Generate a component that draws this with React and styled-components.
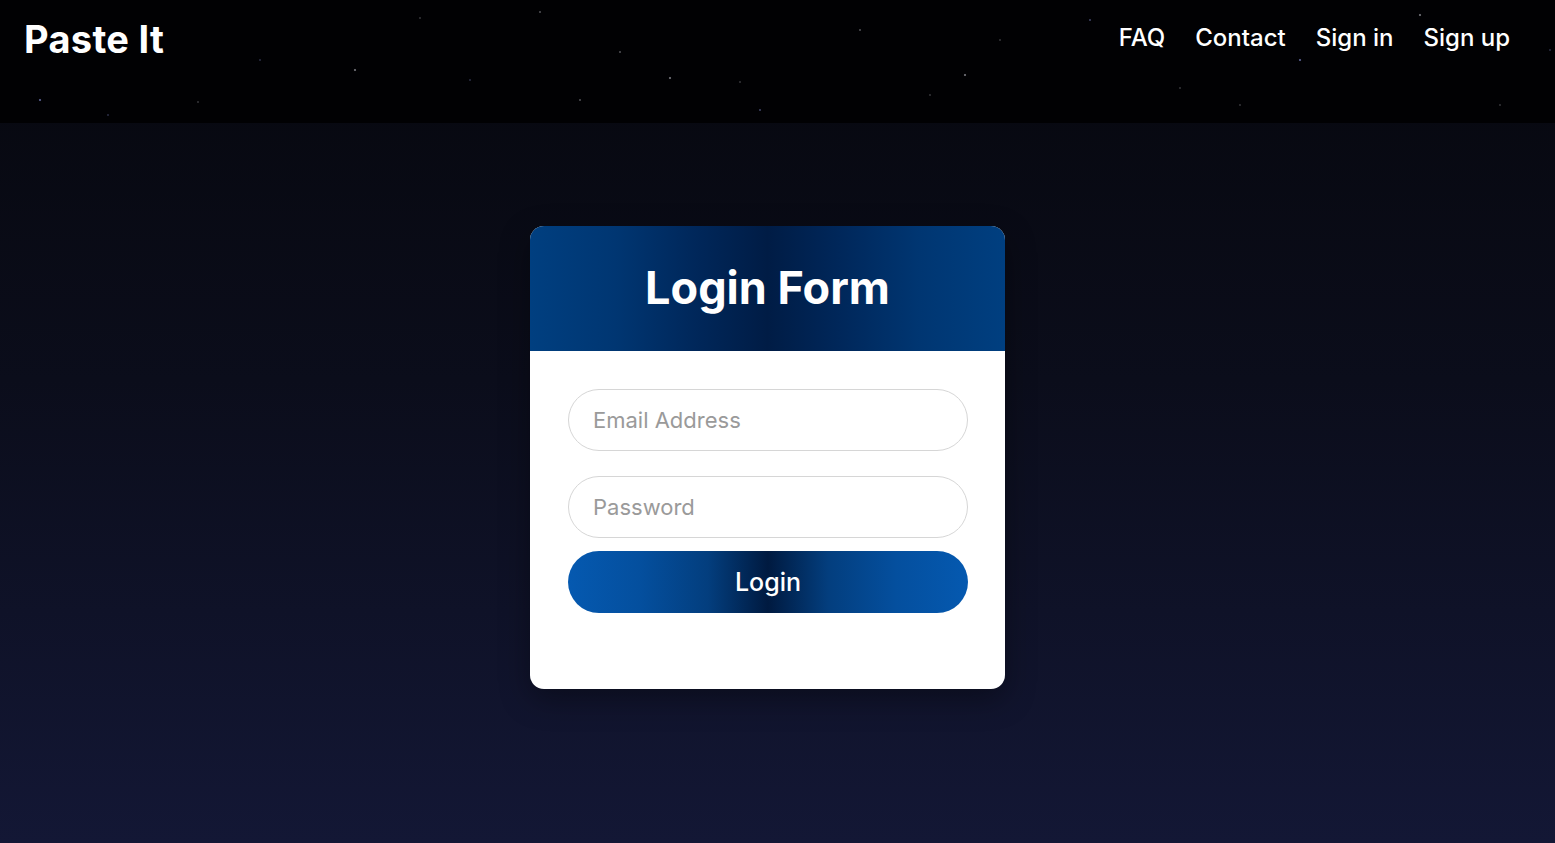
import React from 'react';
import styled, { createGlobalStyle } from 'styled-components';

const GlobalStyle = createGlobalStyle`
  html, body {
    margin: 0;
    padding: 0;
  }
  body {
    font-family: Inter, "Noto Sans", sans-serif;
    background: #07080f;
  }
  * {
    box-sizing: border-box;
  }
`

const stars = [
  [40, 100], [198, 102], [620, 52], [470, 80], [670, 78], [740, 82], [1090, 20], [1500, 105],
  [355, 70], [108, 115], [540, 12], [930, 95], [1300, 60], [1180, 88], [860, 30], [260, 60],
  [1420, 15], [1000, 40], [760, 110], [420, 18], [965, 75], [1550, 50], [580, 100], [1240, 105]
];

const starLayer = stars
  .map(([x, y], i) => `radial-gradient(circle at ${x}px ${y}px, rgba(${i % 3 === 0 ? '160,170,255' : '200,200,210'},${i % 2 ? 0.55 : 0.85}) 0, transparent ${i % 4 === 0 ? 1.6 : 1.1}px)`)
  .join(', ');

const Page = styled.div`
  min-height: 100vh;
  display: flex;
  flex-direction: column;
  background: linear-gradient(180deg, #06070d 0%, #0b0d1b 45%, #131735 100%);
`
const NavBar = styled.header`
  height: 123px;
  display: flex;
  align-items: flex-start;
  justify-content: space-between;
  padding: 16px 45px 0 24px;
  background: ${starLayer}, #010103;
`
const Brand = styled.div`
  font-size: 38px;
  font-weight: 700;
  color: #fff;
  letter-spacing: 0.3px;
`
const NavLinks = styled.nav`
  display: flex;
  gap: 30px;
  padding-top: 7px;
`
const NavLink = styled.a`
  font-size: 24px;
  font-weight: 500;
  color: #fff;
  text-decoration: none;
  cursor: pointer;
`
const Main = styled.main`
  flex: 1;
  display: flex;
  justify-content: center;
  padding: 103px 20px 0 0;
`
const Card = styled.div`
  width: 475px;
  height: 463px;
  background: #fff;
  border-radius: 14px;
  overflow: hidden;
  box-shadow: 0 10px 30px rgba(0, 0, 0, 0.35);
`
const CardHeader = styled.div`
  height: 125px;
  display: flex;
  align-items: center;
  justify-content: center;
  background: linear-gradient(90deg, #003f80 0%, #003672 18%, #00275a 35%, #001c45 50%, #00275a 65%, #003672 82%, #003f80 100%);
`
const Title = styled.h1`
  margin: 0;
  font-size: 45px;
  font-weight: 700;
  color: #fff;
  padding-bottom: 2px;
`
const Form = styled.form`
  display: flex;
  flex-direction: column;
  padding: 38px 37px 0 38px;
`
const Input = styled.input`
  height: 62px;
  width: 100%;
  border: 1px solid #d6d6d6;
  border-radius: 31px;
  padding: 0 24px;
  font-family: Inter, "Noto Sans", sans-serif;
  font-size: 22px;
  color: #333;
  outline: none;
  margin-bottom: ${props => props.gapBelow}px;
  &::placeholder {
    color: #9a9a9a;
  }
`
const LoginButton = styled.button`
  height: 62px;
  width: 100%;
  border: 0;
  border-radius: 31px;
  font-family: Inter, "Noto Sans", sans-serif;
  font-size: 25px;
  font-weight: 500;
  color: #fff;
  cursor: pointer;
  background: linear-gradient(90deg, #0559b0 0%, #044f9e 18%, #033e7e 35%, #001a40 50%, #033e7e 65%, #044f9e 82%, #0559b0 100%);
`

export default function App() {
  return (
    <Page>
      <GlobalStyle />
      <NavBar>
        <Brand>Paste It</Brand>
        <NavLinks>
          <NavLink>FAQ</NavLink>
          <NavLink>Contact</NavLink>
          <NavLink>Sign in</NavLink>
          <NavLink>Sign up</NavLink>
        </NavLinks>
      </NavBar>
      <Main>
        <Card>
          <CardHeader>
            <Title>Login Form</Title>
          </CardHeader>
          <Form onSubmit={(e) => e.preventDefault()}>
            <Input type="email" placeholder="Email Address" gapBelow={25} />
            <Input type="password" placeholder="Password" gapBelow={13} />
            <LoginButton type="submit">Login</LoginButton>
          </Form>
        </Card>
      </Main>
    </Page>
  );
}
